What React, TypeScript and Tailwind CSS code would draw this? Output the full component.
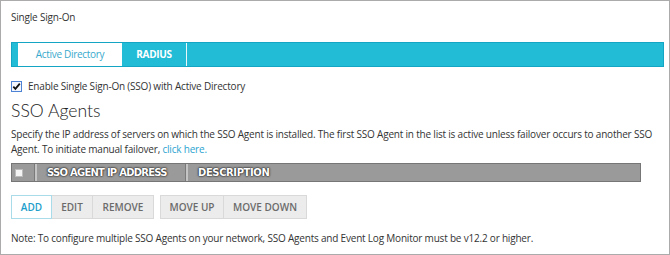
import React from "react";

export default function App() {
  const btn =
    "h-[24px] flex items-center justify-center border border-[#d9d9d9] bg-[#ececec] text-[#6b6b6b] text-[10px] font-semibold";
  return (
    <div className="w-[670px] h-[255px] border border-[#ababab] bg-white pl-[10px] font-['Open_Sans',sans-serif] text-[10px] tracking-[-0.2px] text-[#333]">
      <div className="pt-[8px] h-[24px] leading-[16px] text-[#333]">Single Sign-On</div>
      <div className="mt-[17px] w-[653px] h-[25px] border border-[#14a5c4] bg-[#23bcd7] flex tracking-normal">
        <div className="w-[6px]" />
        <div className="w-[104px] bg-white flex items-center justify-center text-[#38a9cc] text-[10px] tracking-[-0.3px]">
          Active Directory
        </div>
        <div className="w-[65px] border-r border-[#e9f7fb] flex items-center justify-center text-white font-bold text-[10px] tracking-[-0.3px]">
          RADIUS
        </div>
      </div>
      <div className="mt-[12px] h-[14px] flex items-center gap-[6px]">
        <div className="w-[11px] h-[11px] border border-[#4d82d4] bg-[#f3f7fd] flex items-center justify-center">
          <svg width="9" height="9" viewBox="0 0 9 9">
            <path d="M1.3 4.6 L3.4 6.8 L7.8 1.6" fill="none" stroke="#111" strokeWidth="1.8" />
          </svg>
        </div>
        <span className="text-[10px] text-[#333] leading-[14px]">
          Enable Single Sign-On (SSO) with Active Directory
        </span>
      </div>
      <div className="mt-[6px] h-[24px] leading-[24px] text-[17.6px] tracking-normal font-light text-[#222] font-['Lato',sans-serif]">
        SSO Agents
      </div>
      <div className="mt-[4px] w-[650px] leading-[15px] text-[10px] text-[#333]">
        Specify the IP address of servers on which the SSO Agent is installed. The first SSO Agent in the list is active unless failover occurs to another SSO
        <br />
        Agent. To initiate manual failover, <span className="text-[#2ba3cf]">click here.</span>
      </div>
      <div className="mt-[6px] w-[630px] h-[19px] border border-[#767676] bg-[#9a9a9a] flex text-white font-bold text-[10px] font-['DejaVu_Sans',sans-serif] [text-shadow:0_0_1px_#222,0_0_2px_#333,0_0_2px_#333]">
        <div className="w-[23px] border-r border-[#7a7a7a] flex items-center pl-[3px]">
          <div className="w-[8px] h-[8px] bg-[#f4f4f4] border border-[#bbb]" />
        </div>
        <div className="w-[151px] border-l-[2px] border-[#c4c4c4] border-r border-r-[#7a7a7a] flex items-center pl-[10px] tracking-[-0.75px]">
          SSO AGENT IP ADDRESS
        </div>
        <div className="flex-1 border-l-[2px] border-[#c4c4c4] flex items-center pl-[10px] tracking-[-0.4px]">
          DESCRIPTION
        </div>
      </div>
      <div className="mt-[13px] flex tracking-normal">
        <div className="h-[24px] w-[41px] flex items-center justify-center border border-[#a9dbe9] bg-white text-[#1d9dca] text-[10px] font-semibold">
          ADD
        </div>
        <div className={btn + " w-[41px] border-l-0"}>EDIT</div>
        <div className={btn + " w-[61px] border-l-0"}>REMOVE</div>
        <div className={btn + " w-[64px] ml-[6px]"}>MOVE UP</div>
        <div className={btn + " w-[83px] border-l-0"}>MOVE DOWN</div>
      </div>
      <div className="mt-[11px] leading-[16px] text-[10px] text-[#333]">
        Note: To configure multiple SSO Agents on your network, SSO Agents and Event Log Monitor must be v12.2 or higher.
      </div>
    </div>
  );
}
